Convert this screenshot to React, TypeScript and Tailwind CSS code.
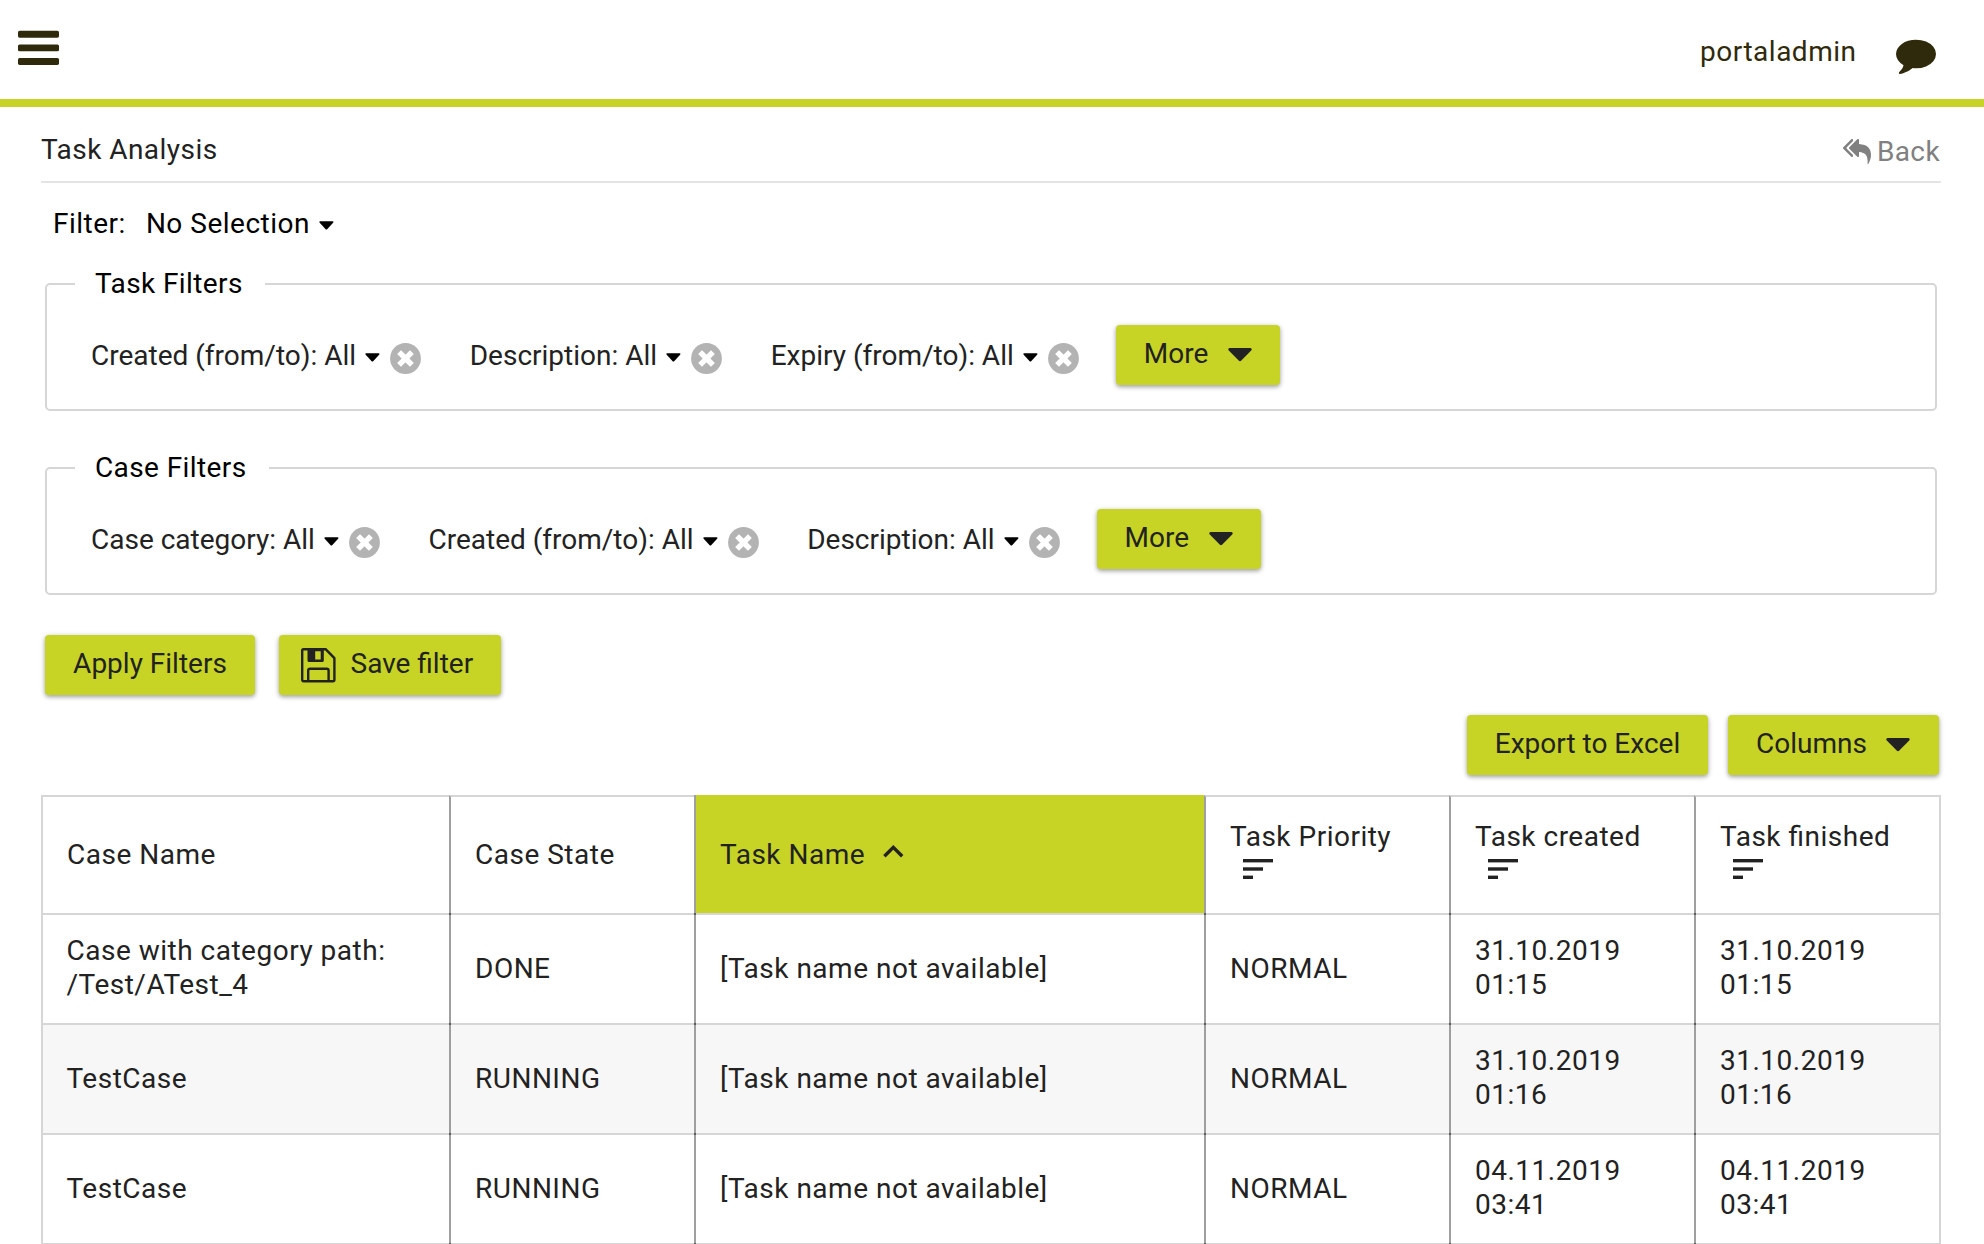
import type { ReactNode } from "react";

function BarsIcon() {
  return (
    <svg width="42" height="35" viewBox="0 0 42 35" fill="#2f2a0b" className="block">
      <rect x="0" y="0.8" width="41" height="6.9" rx="1.6" />
      <rect x="0" y="14.4" width="41" height="6.9" rx="1.6" />
      <rect x="0" y="28" width="41" height="6.9" rx="1.6" />
    </svg>
  );
}

function CommentIcon() {
  return (
    <svg width="40" height="40" viewBox="0 0 1792 1792" fill="#2f2a0b" className="block">
      <path d="M1792 896q0 174-120 321.5t-326 233-450 85.5q-70 0-145-8-198 175-460 242-49 14-114 22-17 2-30.5-9t-17.5-29v-1q-3-4-.5-12t2-10 4.5-9.5l6-9 7-8.5 8-9q7-8 31-34.5t34.5-38 31-39.5 32.5-51 27-59 26-76q-157-89-247.5-220t-90.5-281q0-130 71-248.5t191-204.5 286-136.5 348-50.5q244 0 450 85.5t326 233 120 321.5z" />
    </svg>
  );
}

function ReplyAllIcon() {
  return (
    <svg width="28" height="25" viewBox="0 64 1792 1600" fill="#808080" className="block -translate-y-px">
      <path d="M640 1082v70q0 42-39 59-13 5-25 5-27 0-45-19L19 685q-19-19-19-45t19-45L531 83q29-31 70-14 39 17 39 59v69L243 595q-19 19-19 45t19 45zM1792 1120q0 58-17 133.5t-38.5 138-48 125-40.5 90.5l-20 40q-8 17-28 17-6 0-9-1-25-8-23-34 43-400-106-565-64-71-170.5-110.5T1024 902v250q0 42-39 59-13 5-25 5-27 0-45-19L403 685q-19-19-19-45t19-45L915 83q29-31 70-14 39 17 39 59v262q411 28 599 221 169 173 169 509z" />
    </svg>
  );
}

function SmallCaret({ className = "" }: { className?: string }) {
  return (
    <svg width="15" height="9" viewBox="0 0 15 9" fill="#000" className={"block shrink-0 " + className}>
      <path d="M1.2 0.2H13.6Q15 0.5 14.1 1.7L8.4 7.9Q7.4 8.9 6.4 7.9L0.7 1.7Q-0.2 0.5 1.2 0.2Z" />
    </svg>
  );
}

function BigCaret() {
  return (
    <svg width="24" height="14" viewBox="0 0 24 14" fill="#222" className="block shrink-0 translate-y-[2px]">
      <path d="M1.6 0H22.4Q24.6 0.5 23.2 2.4L13.3 12.6Q12 13.8 10.7 12.6L0.8 2.4Q-0.6 0.5 1.6 0Z" />
    </svg>
  );
}

function RemoveIcon() {
  return (
    <svg width="31" height="31" viewBox="0 0 31 31" className="block shrink-0 translate-y-[3px]">
      <circle cx="15.5" cy="15.5" r="15.4" fill="#b3b3b3" />
      <path d="M11 11L20 20M20 11L11 20" stroke="#fff" strokeWidth="5.4" strokeLinecap="square" />
    </svg>
  );
}

function SaveIcon() {
  return (
    <svg width="35" height="35" viewBox="0 0 35 35" fill="none" stroke="#222" strokeWidth="2.4" strokeLinejoin="round" className="block shrink-0">
      <path d="M2.5 1.2H24.6L33.4 10.2V31.8Q33.4 33.2 32 33.2H2.6Q1.2 33.2 1.2 31.8V2.5Q1.2 1.2 2.5 1.2Z" />
      <path d="M7.2 33V22.6Q7.2 20.8 9 20.8H25.8Q27.6 20.8 27.6 22.6V33" />
      <path d="M6.5 1H22.8V12.4Q22.8 14 21.2 14H8Q6.5 14 6.5 12.4ZM14.2 3.2V11.6H19.7V3.2Z" fill="#222" fillRule="evenodd" stroke="none" />
    </svg>
  );
}

function SortIcon() {
  return (
    <svg width="30" height="20" viewBox="0 0 30 20" fill="#222" className="ml-[13px] block">
      <rect width="30" height="3.4" />
      <rect y="8.3" width="20" height="3.4" />
      <rect y="16.6" width="10" height="3.4" />
    </svg>
  );
}

function ChevronUpIcon() {
  return (
    <svg width="21" height="13" viewBox="0 0 21 13" fill="none" stroke="#222" strokeWidth="3.4" className="block">
      <path d="M1.4 11.3L10.3 2.4L19.2 11.3" />
    </svg>
  );
}

function Button({ children, className = "" }: { children: ReactNode; className?: string }) {
  return (
    <button
      className={
        "flex h-[60px] shrink-0 items-center rounded-[4px] bg-[#c7d426] pb-[2px] tracking-normal whitespace-nowrap text-[#222] shadow-[0_2px_4px_rgba(0,0,0,0.3),0_1px_6px_rgba(0,0,0,0.12)] " +
        className
      }
    >
      {children}
    </button>
  );
}

function FilterSet({ title, filters }: { title: string; filters: string[] }) {
  return (
    <fieldset className="mb-10 ml-1 w-[1892px] rounded-[5px] border-2 border-[#d6d6d6] pr-7 pb-6 pl-7">
      <legend className="pt-px pr-[22px] pb-px pl-5 leading-8 tracking-[0.4px]">{title}</legend>
      <div className="flex items-center pt-6 pl-4 tracking-normal text-[#222]">
        {filters.map((name) => (
          <div key={name} className="mr-[48.6px] flex items-center last-of-type:mr-[37px]">
            <span className="translate-y-px leading-[34px] whitespace-nowrap">{name}: All</span>
            <SmallCaret className="ml-[9px] translate-y-[2px]" />
            <span className="ml-[10px]">
              <RemoveIcon />
            </span>
          </div>
        ))}
        <Button className="w-[164px] pl-7">
          <span>More</span>
          <span className="ml-5 -translate-y-px">
            <BigCaret />
          </span>
        </Button>
      </div>
    </fieldset>
  );
}

const columns: { title: string; sort?: "none" | "asc" }[] = [
  { title: "Case Name" },
  { title: "Case State" },
  { title: "Task Name", sort: "asc" },
  { title: "Task Priority", sort: "none" },
  { title: "Task created", sort: "none" },
  { title: "Task finished", sort: "none" },
];

const rows: string[][] = [
  ["Case with category path: /Test/ATest_4", "DONE", "[Task name not available]", "NORMAL", "31.10.2019 01:15", "31.10.2019 01:15"],
  ["TestCase", "RUNNING", "[Task name not available]", "NORMAL", "31.10.2019 01:16", "31.10.2019 01:16"],
  ["TestCase", "RUNNING", "[Task name not available]", "NORMAL", "04.11.2019 03:41", "04.11.2019 03:41"],
];

const rowGrid = "grid grid-cols-[408px_245px_510px_245px_245px_247px]";
const cellBase =
  "relative flex items-center border-b-2 border-l-2 border-b-[#d6d6d6] border-l-[#9f9f9f] px-6 first:border-l-[#d6d6d6] last:border-r-2 last:border-r-[#d6d6d6] after:absolute after:-bottom-[2px] after:-left-[2px] after:size-[2px] after:bg-[#5c5c5c] first:after:hidden";

export default function App() {
  return (
    <div className="h-[1244px] w-[1984px] overflow-hidden bg-white font-['Roboto',sans-serif] text-[28px] leading-[34px] tracking-[0.5px] text-black">
      <header className="flex h-[107px] items-start justify-between border-b-8 border-[#c7d426] pr-12 pl-[18px] text-[#2f2a0b]">
        <div className="pt-[30px]">
          <BarsIcon />
        </div>
        <div className="flex items-start">
          <span className="mt-[35px] mr-[39.5px]">portaladmin</span>
          <span className="mt-[34px]">
            <CommentIcon />
          </span>
        </div>
      </header>

      <main className="pr-[43px] pl-[41px]">
        <div className="flex h-[76px] items-start justify-between border-b-2 border-[#e4e4e4] pt-[26px]">
          <h1 className="tracking-[0.45px] text-[#222]">Task Analysis</h1>
          <a className="mt-[2px] mr-px flex items-center tracking-[0.4px] text-[#808080]">
            <ReplyAllIcon />
            <span className="ml-[6px]">Back</span>
          </a>
        </div>

        <div className="mb-[26px] flex items-center pt-6 pl-3">
          <span>Filter:</span>
          <span className="ml-[20px]">No Selection</span>
          <SmallCaret className="ml-[9px] translate-y-px" />
        </div>

        <FilterSet title="Task Filters" filters={["Created (from/to)", "Description", "Expiry (from/to)"]} />
        <FilterSet title="Case Filters" filters={["Case category", "Created (from/to)", "Description"]} />

        <div className="ml-1 flex gap-6">
          <Button className="w-[210px] justify-center">Apply Filters</Button>
          <Button className="w-[222px] pl-[22px]">
            <span className="translate-y-px">
              <SaveIcon />
            </span>
            <span className="ml-[14.5px]">Save filter</span>
          </Button>
        </div>

        <div className="mt-5 mb-5 flex justify-end gap-5 pr-[2px]">
          <Button className="w-[241px] justify-center">Export to Excel</Button>
          <Button className="w-[211px] pl-7">
            <span>Columns</span>
            <span className="ml-[19px] -translate-y-px">
              <BigCaret />
            </span>
          </Button>
        </div>

        <div className="w-[1900px] text-[#222] [font-feature-settings:'liga']">
          <div className={rowGrid + " h-[120px]"}>
            {columns.map((c) => (
              <div
                key={c.title}
                className={
                  cellBase +
                  (c.sort === "asc" ? " border-t-0 bg-[#c7d426] bg-clip-padding pt-[2px]" : " border-t-2 border-t-[#d6d6d6]") +
                  (c.sort === "none" ? " items-start pt-[23px]" : "")
                }
              >
                {c.sort === "none" ? (
                  <div className="whitespace-nowrap">
                    <div>{c.title}</div>
                    <div className="pt-[5px]">
                      <SortIcon />
                    </div>
                  </div>
                ) : (
                  <div className="flex items-center">
                    <span>{c.title}</span>
                    {c.sort === "asc" && (
                      <span className="ml-[17.5px] -translate-y-1">
                        <ChevronUpIcon />
                      </span>
                    )}
                  </div>
                )}
              </div>
            ))}
          </div>
          {rows.map((row, i) => (
            <div key={i} className={rowGrid + " h-[110px] odd:bg-[#f7f7f7] even:bg-white"}>
              {row.map((text, j) => {
                const twoLines = j > 3 || text.length > 30;
                return (
                  <div key={j} className={cellBase + (twoLines ? " pb-[2px]" : "") + (j === 0 ? " pl-[23.5px]" : "")}>
                    {text}
                  </div>
                );
              })}
            </div>
          ))}
        </div>
      </main>
    </div>
  );
}
